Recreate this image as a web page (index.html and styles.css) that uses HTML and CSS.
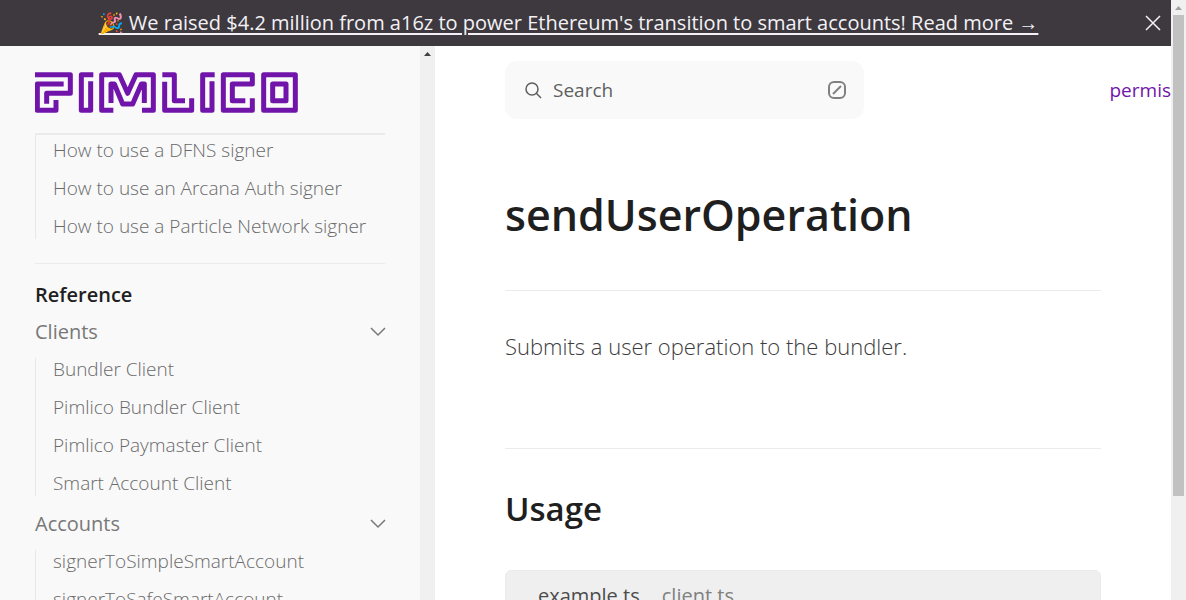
FILE: index.html
```html
<!DOCTYPE html>
<html lang="en">
<head>
<meta charset="utf-8">
<title>sendUserOperation</title>
<link rel="stylesheet" href="styles.css">
</head>
<body>
<div class="page">
  <div class="app">
    <div class="banner">
      <a class="banner-link" href="#">🎉 We raised $4.2 million from a16z to power Ethereum's transition to smart accounts! Read more →</a>
      <button class="banner-close" type="button" aria-label="Close">
        <svg width="16" height="16" viewBox="0 0 16 16"><path d="M1 1 15 15M15 1 1 15"/></svg>
      </button>
    </div>
    <div class="columns">
      <aside class="sidebar">
        <div class="sidebar-body">
          <a class="logo" href="#" aria-label="Pimlico">
            <svg width="263" height="41" viewBox="45 51 789 123">
              <path d="M45 59H151V115H80V146M131 87H52V166H108V135"/>
              <path d="M220 59H184V166H212V79"/>
              <path d="M280 166H245V59H298L323 115 348 59H400V166H366M273 144V87H283L308 147H338L364 87H373V144"/>
              <path d="M427 59H463V137H495M434 80V166H515V130"/>
              <path d="M584 59H548V166H576V79"/>
              <path d="M697 130V166H610V59H697V87H637V137H676"/>
              <path d="M731 59H826V166H731ZM758 87H798V137H758Z"/>
            </svg>
          </a>
          <nav class="nav">
            <ul class="items items-first">
              <li><a href="#">How to use a DFNS signer</a></li>
              <li><a href="#">How to use an Arcana Auth signer</a></li>
              <li><a href="#">How to use a Particle Network signer</a></li>
            </ul>
            <section class="group">
              <h2 class="group-title">Reference</h2>
              <button class="section" type="button">Clients
                <svg width="16" height="10" viewBox="0 0 16 10"><path d="M2 1 9 8 16 1"/></svg>
              </button>
              <ul class="items">
                <li><a href="#">Bundler Client</a></li>
                <li><a href="#">Pimlico Bundler Client</a></li>
                <li><a href="#">Pimlico Paymaster Client</a></li>
                <li><a href="#">Smart Account Client</a></li>
              </ul>
              <button class="section section-next" type="button">Accounts
                <svg width="16" height="10" viewBox="0 0 16 10"><path d="M2 1 9 8 16 1"/></svg>
              </button>
              <ul class="items">
                <li><a href="#">signerToSimpleSmartAccount</a></li>
                <li><a href="#">signerToSafeSmartAccount</a></li>
              </ul>
            </section>
          </nav>
        </div>
        <div class="side-track"><svg width="7" height="4" viewBox="0 0 7 4"><path d="M0 4 3.500 0 7 4Z"/></svg></div>
      </aside>
      <main class="main">
        <header class="topbar">
          <button class="search" type="button">
            <svg class="search-icon" width="17" height="17" viewBox="0 0 17 17"><circle cx="7" cy="7" r="6"/><path d="M11.300 11.300 16 16"/></svg>
            <span class="search-label">Search</span>
            <svg class="slash-icon" width="18" height="18" viewBox="0 0 18 18"><rect x="1" y="1" width="16" height="16" rx="5"/><path d="M5 13 13 5"/></svg>
          </button>
          <a class="toplink" href="#">permis</a>
        </header>
        <article class="content">
          <h1 class="title">sendUserOperation</h1>
          <p class="lead">Submits a user operation to the bundler.</p>
          <h2 class="subtitle">Usage</h2>
          <div class="code">
            <div class="tabs" role="tablist">
              <button class="tab tab-active" type="button" role="tab" aria-selected="true">example.ts</button>
              <button class="tab" type="button" role="tab" aria-selected="false">client.ts</button>
            </div>
          </div>
        </article>
      </main>
    </div>
  </div>
  <div class="page-track">
    <svg width="7" height="4" viewBox="0 0 7 4"><path d="M0 4 3.500 0 7 4Z"/></svg>
    <div class="page-thumb"></div>
  </div>
</div>
</body>
</html>
```

FILE: styles.css
```css
* { box-sizing: border-box; }
body {
  margin: 0;
  font-family: "Open Sans", "Noto Sans", sans-serif;
  color: #1f1f1f;
  background: #fff;
}
h1, h2, p, ul { margin: 0; padding: 0; }
ul { list-style: none; }
a { color: inherit; text-decoration: none; }
button { font: inherit; border: 0; padding: 0; background: none; cursor: pointer; }
svg { display: block; flex: none; fill: none; stroke: currentColor; }

.page { display: flex; height: 100vh; overflow: hidden; }
.app { flex: 1; min-width: 0; display: flex; flex-direction: column; }

.banner {
  flex: none;
  height: 46px;
  display: flex;
  align-items: center;
  padding-right: 10px;
  background: #3d393f;
  color: #f3f1f5;
}
.banner-link {
  flex: 1;
  padding-right: 8px;
  text-align: center;
  white-space: nowrap;
  font-size: 20px;
  line-height: 28px;
  text-decoration: underline;
  text-decoration-thickness: 2px;
  text-underline-offset: 3px;
}
.banner-close { color: #f3f1f5; }
.banner-close svg { stroke-width: 1.500; }

.columns { flex: 1; min-height: 0; display: flex; }
.sidebar { flex: none; width: 435px; display: flex; background: #f9f9f9; overflow: hidden; }
.sidebar-body { flex: 1; padding: 26px 35px 0; }
.side-track {
  width: 15px;
  padding-top: 6px;
  display: flex;
  justify-content: center;
  background: #f0f0f0;
}
.side-track path { fill: #404040; stroke: none; }
.logo { display: block; color: #7115aa; }
.logo svg { stroke-width: 15; stroke-linejoin: round; }

.nav { margin-top: 20px; border-top: 2px solid #ebebeb; white-space: nowrap; }
.items { border-left: 1px solid #e8e8e8; padding-left: 17px; }
.items li { font-size: 19px; line-height: 38px; font-weight: 300; color: #6a6a6a; }
.items li:first-child { line-height: 22px; padding-bottom: 8px; }
.items li:last-child { line-height: 26px; padding-top: 6px; }
.items-first li:first-child { line-height: 30px; padding-bottom: 4px; }
.group { margin-top: 24px; padding-top: 18px; border-top: 1px solid #ebebeb; }
.group-title { font-size: 20px; line-height: 26px; font-weight: 600; }
.section {
  width: 100%;
  margin-top: 10px;
  display: flex;
  align-items: center;
  justify-content: space-between;
  font-size: 20px;
  line-height: 28px;
  color: #787878;
}
.section svg { stroke-width: 1.500; overflow: visible; }
.section + .items { margin-top: 12px; }
.section-next { margin-top: 14px; }

.main { flex: 1; min-width: 0; overflow: hidden; padding: 15px 0 0 70px; }
.topbar { display: flex; align-items: center; justify-content: space-between; }
.search {
  width: 359px;
  height: 58px;
  padding: 0 18px 0 20px;
  display: flex;
  align-items: center;
  border-radius: 12px;
  background: #f9f9f9;
  color: #5f5f5f;
  font-size: 19px;
}
.search-icon { stroke-width: 1.500; }
.search-label { flex: 1; text-align: left; padding-left: 11px; }
.slash-icon { stroke-width: 2; color: #808080; }
.toplink { color: #7115aa; font-size: 19px; }

.content { margin-right: 70px; }
.title {
  padding: 62px 0 41px;
  border-bottom: 1px solid #ebebeb;
  font-size: 43px;
  line-height: 68px;
  font-weight: 600;
}
.lead { padding-top: 37px; font-size: 22px; line-height: 36px; font-weight: 300; color: #3c3c3c; }
.subtitle {
  margin-top: 84px;
  padding: 35px 0 37px;
  border-top: 1px solid #ebebeb;
  font-size: 33px;
  line-height: 49px;
  font-weight: 600;
}
.code { height: 120px; border: 1px solid #ebebeb; border-radius: 6px; background: #efefef; }
.tabs { display: flex; gap: 22px; padding: 9px 32px; }
.tab { font-size: 20px; line-height: 32px; color: #808080; }
.tab-active { color: #4c4c4c; }

.page-track {
  flex: none;
  width: 15px;
  display: flex;
  flex-direction: column;
  align-items: center;
  padding-top: 6px;
  gap: 5px;
  background: #f0f0f0;
}
.page-track path { fill: #a0a0a0; stroke: none; }
.page-thumb { width: 11px; height: 81%; background: #c1c1c1; }
```
